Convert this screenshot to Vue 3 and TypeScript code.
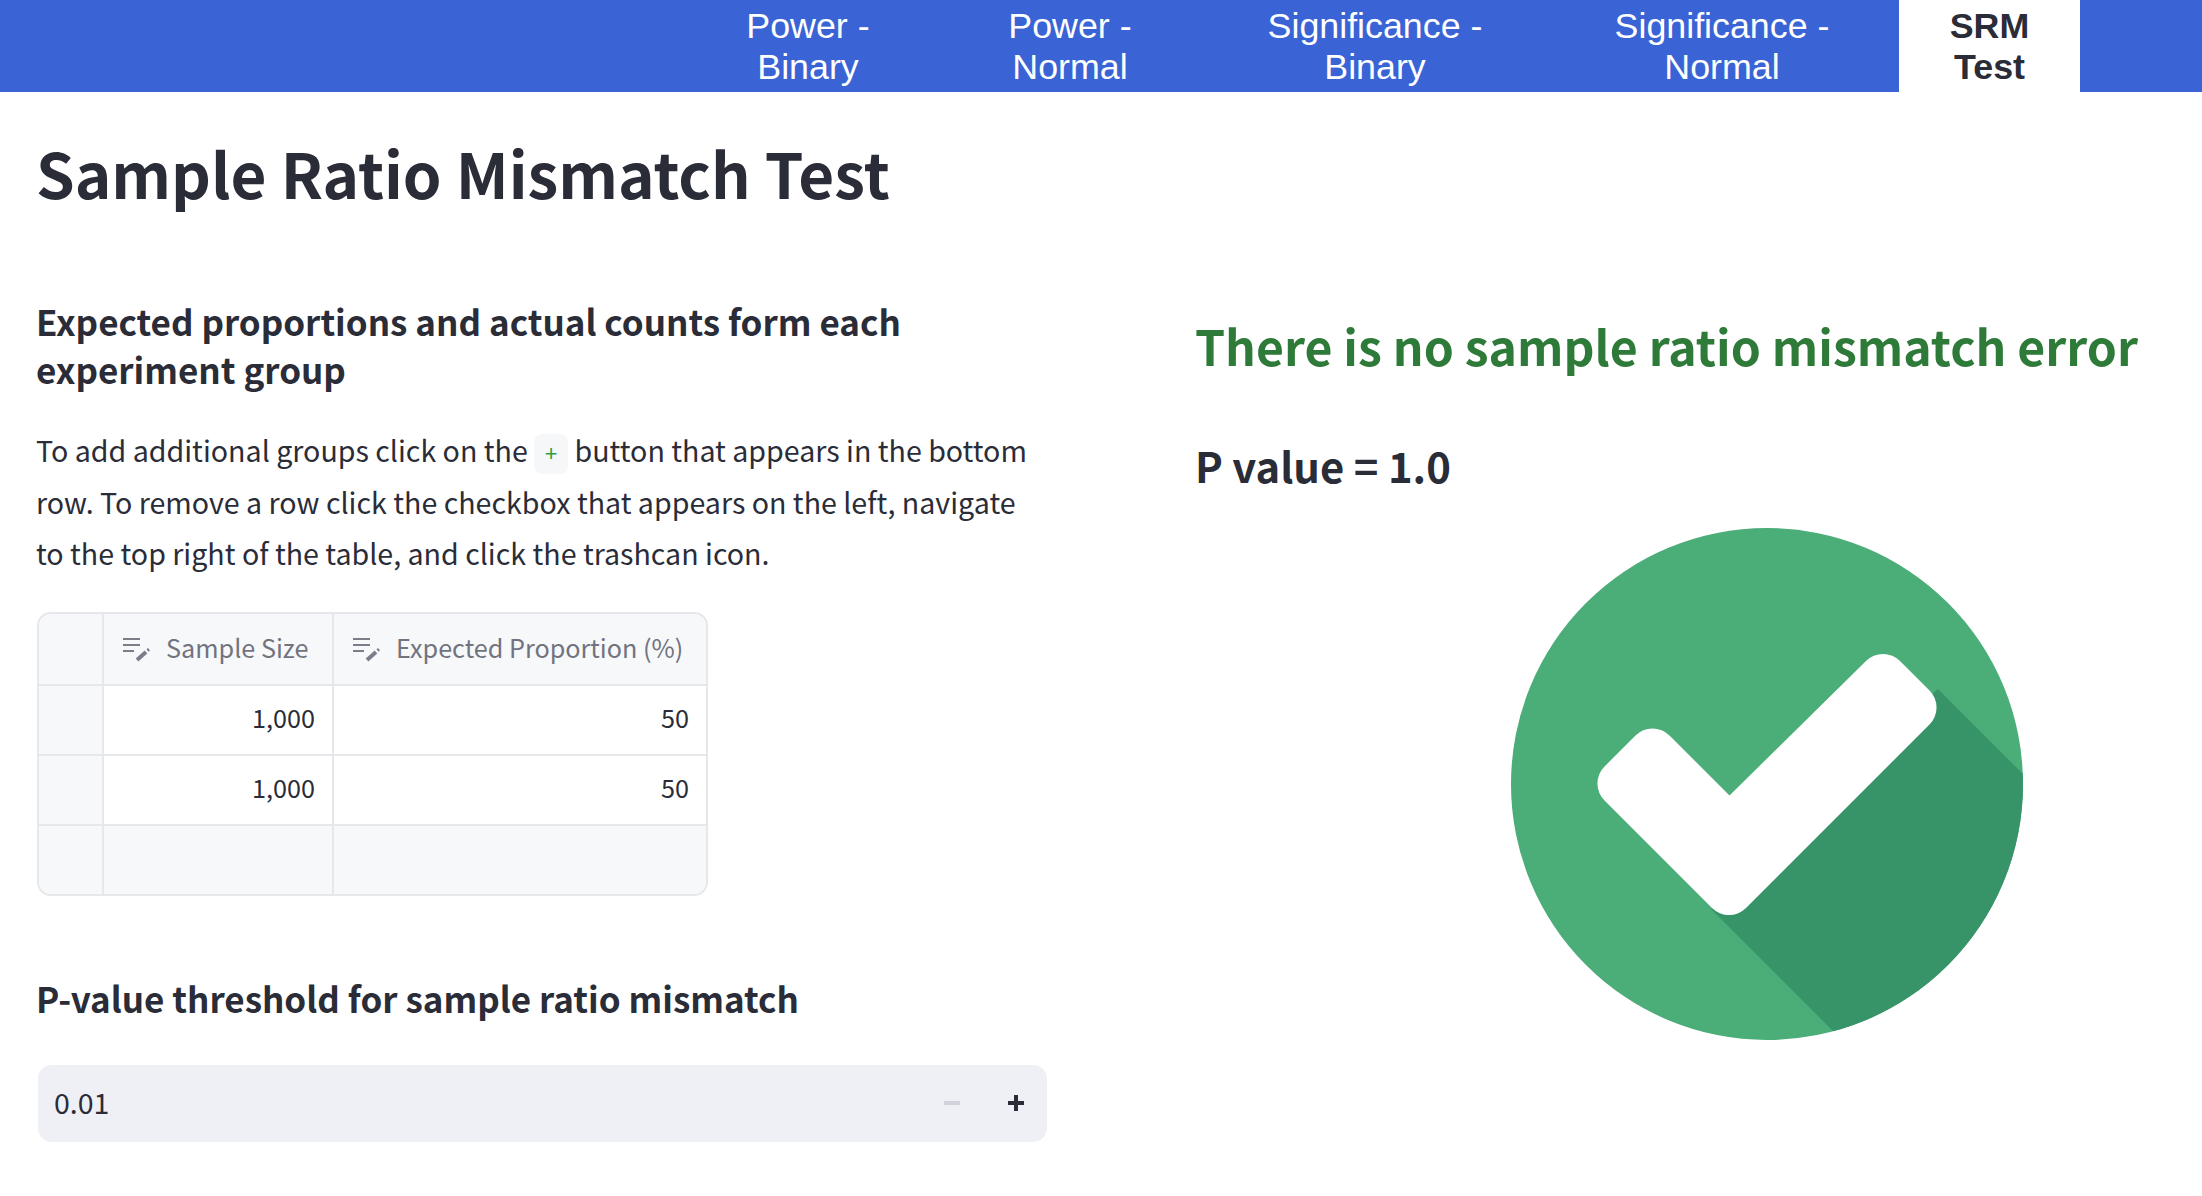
<script setup lang="ts">
interface NavItem {
  lines: string[]
  width: number
  active?: boolean
}

const navItems: NavItem[] = [
  { lines: ['Power -', 'Binary'], width: 254 },
  { lines: ['Power -', 'Normal'], width: 270 },
  { lines: ['Significance -', 'Binary'], width: 340 },
  { lines: ['Significance -', 'Normal'], width: 354 },
  { lines: ['SRM', 'Test'], width: 181, active: true },
]

const rows = [
  ['1,000', '50'],
  ['1,000', '50'],
  ['', ''],
]
</script>

<template>
  <div class="page">
    <nav class="nav">
      <a
        v-for="item in navItems"
        :key="item.lines.join(' ')"
        class="nav-item"
        :class="{ active: item.active }"
        :style="{ width: item.width + 'px' }"
      >
        <span v-for="line in item.lines" :key="line">{{ line }}</span>
      </a>
    </nav>

    <main class="main">
      <h1 class="title">Sample Ratio Mismatch Test</h1>

      <div class="columns">
        <section class="left">
          <h3 class="heading">Expected proportions and actual counts form each experiment group</h3>
          <p class="intro">
            To add additional groups click on the <code class="plus-code">+</code> button that appears in the bottom
            row. To remove a row click the checkbox that appears on the left, navigate
            to the top right of the table, and click the trashcan icon.
          </p>

          <div class="table">
            <div class="cell head"></div>
            <div class="cell head col-label">
              <svg class="edit-icon" width="30" height="26" viewBox="0 0 30 26">
                <path d="M1 2h17M1 8h17M1 14h11" stroke="#7b7d88" stroke-width="2" fill="none" />
                <path d="M15 23l9-8" stroke="#7b7d88" stroke-width="4" fill="none" />
                <path d="M25.500 13.500l1.500-1.300" stroke="#7b7d88" stroke-width="3" fill="none" />
              </svg>
              Sample Size
            </div>
            <div class="cell head col-label">
              <svg class="edit-icon" width="30" height="26" viewBox="0 0 30 26">
                <path d="M1 2h17M1 8h17M1 14h11" stroke="#7b7d88" stroke-width="2" fill="none" />
                <path d="M15 23l9-8" stroke="#7b7d88" stroke-width="4" fill="none" />
                <path d="M25.500 13.500l1.500-1.300" stroke="#7b7d88" stroke-width="3" fill="none" />
              </svg>
              Expected Proportion (%)
            </div>
            <template v-for="(row, i) in rows" :key="i">
              <div class="cell head"></div>
              <div class="cell num" :class="{ head: !row[0] }">{{ row[0] }}</div>
              <div class="cell num" :class="{ head: !row[1] }">{{ row[1] }}</div>
            </template>
          </div>

          <h3 class="heading threshold">P-value threshold for sample ratio mismatch</h3>

          <div class="stepper">
            <span class="stepper-value">0.01</span>
            <svg class="step" width="18" height="18" viewBox="0 0 18 18">
              <path d="M1 9h16" stroke="#d0d2dc" stroke-width="4" />
            </svg>
            <svg class="step plus" width="18" height="18" viewBox="0 0 18 18">
              <path d="M1 9h16M9 1v16" stroke="#2a2c37" stroke-width="4" />
            </svg>
          </div>
        </section>

        <section class="right">
          <h2 class="result">There is no sample ratio mismatch error</h2>
          <h3 class="pvalue">P value = 1.0</h3>
          <div class="badge">
            <svg width="512" height="512" viewBox="0 0 512 512">
              <defs>
                <clipPath id="disc">
                  <circle cx="256" cy="256" r="256" />
                </clipPath>
              </defs>
              <circle cx="256" cy="256" r="256" fill="#4bad78" />
              <polygon points="427,161 627,361 400,581 200,381" fill="#379368" clip-path="url(#disc)" />
              <path
                d="M158.500 207.500L218.500 267.500L355 133A24 24 0 0 1 389 133L418.500 162.500A24 24 0 0 1 418.500 196.500L235 380A24 24 0 0 1 201 380L93.500 272.500A24 24 0 0 1 93.500 238.500L124.500 207.500A24 24 0 0 1 158.500 207.500Z"
                fill="#fff"
              />
            </svg>
          </div>
        </section>
      </div>
    </main>
  </div>
</template>

<style>
body {
  background: #fff;
}
</style>

<style scoped>
.page {
  width: 2202px;
  height: 1196px;
  overflow: hidden;
  background: #fff;
  color: #2a2c37;
  font-family: "Noto Sans CJK SC", "Noto Sans", sans-serif;
}

.nav {
  height: 92px;
  background: #3a63d6;
  display: flex;
  justify-content: flex-end;
  padding-right: 122px;
}

.nav-item {
  display: flex;
  flex-direction: column;
  align-items: center;
  justify-content: center;
  padding-top: 1px;
  color: #fff;
  font-family: "Liberation Sans", Arial, sans-serif;
  font-size: 35.8px;
  line-height: 41px;
}

.nav-item.active {
  background: #fff;
  color: #2a2c37;
  font-weight: 700;
}

.main {
  padding: 0 36px;
}

.title {
  margin: 0;
  padding-top: 42px;
  font-size: 62px;
  line-height: 76px;
  font-weight: 700;
}

.columns {
  display: grid;
  grid-template-columns: 1011px 1fr;
  column-gap: 148px;
  margin-top: 87px;
}

.heading {
  margin: 0;
  font-size: 35px;
  line-height: 48px;
  font-weight: 700;
}

.intro {
  margin: 31px 0 0;
  font-size: 28.600px;
  line-height: 51.500px;
  font-weight: 400;
}

.plus-code {
  display: inline-block;
  overflow: hidden;
  box-sizing: border-box;
  width: 34px;
  height: 40px;
  padding-top: 2px;
  line-height: 40px;
  text-align: center;
  vertical-align: -12px;
  border-radius: 8px;
  background: #f6f7f9;
  color: #2f9e44;
  font-size: 22px;
  font-family: "Liberation Mono", monospace;
}

.table {
  display: grid;
  grid-template-columns: 65px 230px 372px;
  grid-template-rows: 72px 70px 70px 68px;
  width: 671px;
  margin: 33px 0 0 1px;
  border: 2px solid #e6e7ea;
  border-radius: 14px;
  overflow: hidden;
  background: #fff;
  box-sizing: border-box;
}

.cell {
  display: flex;
  align-items: center;
  padding-bottom: 5px;
  border-right: 2px solid #e6e7ea;
  border-bottom: 2px solid #e6e7ea;
  box-sizing: border-box;
  font-size: 25.200px;
}

.cell:nth-child(3n) {
  border-right: 0;
}

.cell:nth-last-child(-n + 3) {
  border-bottom: 0;
}

.head {
  background: #f7f8fa;
}

.col-label {
  gap: 14px;
  padding-left: 18px;
  padding-bottom: 3px;
  color: #71737f;
}

.edit-icon {
  margin-top: 5px;
}

.num {
  justify-content: flex-end;
  padding-right: 17px;
}

.threshold {
  margin-top: 78px;
}

.stepper {
  display: flex;
  align-items: center;
  height: 77px;
  margin: 43px 0 0 2px;
  padding: 0 22px 0 16px;
  border-radius: 14px;
  background: #eff0f5;
}

.stepper-value {
  flex: 1;
  padding-bottom: 3px;
  font-size: 28.500px;
}

.step {
  flex: none;
}

.step.plus {
  margin-left: 46px;
}

.result {
  margin: 0;
  padding-top: 16px;
  color: #2e7a38;
  font-size: 48.200px;
  line-height: 64px;
  font-weight: 700;
  white-space: nowrap;
}

.pvalue {
  margin: 0;
  padding-top: 60px;
  font-size: 41.800px;
  line-height: 56px;
  font-weight: 700;
}

.badge {
  display: flex;
  margin: 35px 0 0 316px;
}
</style>
